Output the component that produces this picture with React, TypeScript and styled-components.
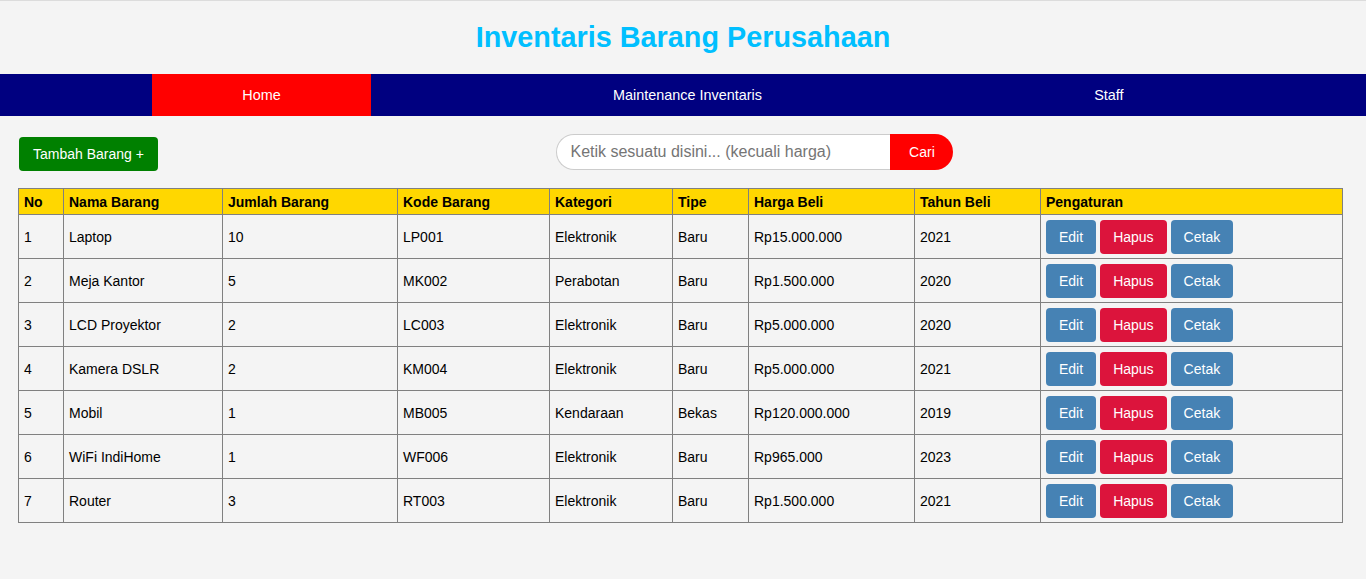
import React from "react";
import styled, { createGlobalStyle } from "styled-components";

const Global = createGlobalStyle`
  html, body { margin: 0; padding: 0; }
  body {
    background: #f4f4f4;
    font-family: "Liberation Sans", Arial, sans-serif;
    color: #000;
    border-top: 1px solid #dcdcdc;
  }
`;

const Header = styled.header`
  height: 73px;
  display: flex;
  align-items: center;
  justify-content: center;
`;

const Title = styled.h1`
  margin: 0;
  font-size: 28.8px;
  font-weight: bold;
  color: #00bfff;
`;

const Nav = styled.nav`
  background: #000080;
  height: 42px;
  display: flex;
  justify-content: space-evenly;
`;

const NavItem = styled.a<{ $active?: boolean }>`
  display: flex;
  align-items: center;
  padding: 0 90px;
  font-size: 14.4px;
  color: #fff;
  text-decoration: none;
  background: ${(p) => (p.$active ? "#ff0000" : "transparent")};
`;

const Main = styled.main`
  padding: 18px 18px 0 18px;
`;

const Toolbar = styled.div`
  display: flex;
  align-items: flex-start;
  margin-bottom: 17px;
`;

const AddButton = styled.button`
  margin: 3px 0 0 1px;
  height: 34px;
  padding: 0 14px;
  background: #008000;
  color: #fff;
  border: none;
  border-radius: 4px;
  font-family: inherit;
  font-size: 14px;
`;

const SearchForm = styled.form`
  display: flex;
  margin: 0 auto;
  transform: translateX(2px);
`;

const SearchInput = styled.input`
  width: 334px;
  height: 36px;
  box-sizing: border-box;
  padding: 0 13px;
  border: 1px solid #ccc;
  border-right: none;
  border-radius: 18px 0 0 18px;
  background: #fff;
  font-family: inherit;
  font-size: 16px;
  outline: none;
  &::placeholder { color: #757575; }
`;

const SearchButton = styled.button`
  width: 63px;
  height: 36px;
  border: none;
  border-radius: 0 18px 18px 0;
  background: #ff0000;
  color: #fff;
  font-family: inherit;
  font-size: 14px;
`;

const Table = styled.table`
  width: 1324px;
  border-collapse: collapse;
  table-layout: fixed;
  font-size: 14px;
`;

const Th = styled.th`
  background: #ffd700;
  border: 1px solid #808080;
  height: 25px;
  padding: 0 5px;
  text-align: left;
  font-weight: bold;
`;

const Td = styled.td`
  border: 1px solid #808080;
  height: 43px;
  padding: 0 5px;
`;

const Actions = styled.div`
  display: flex;
  gap: 4px;
`;

const ActionButton = styled.button<{ $tone: "blue" | "red" }>`
  height: 34px;
  padding: 0 13px;
  border: none;
  border-radius: 4px;
  color: #fff;
  font-family: inherit;
  font-size: 14px;
  background: ${(p) => (p.$tone === "red" ? "#dc143c" : "#4682b4")};
`;

const cols = [45, 159, 175, 152, 123, 76, 166, 126, 302];
const heads = ["No", "Nama Barang", "Jumlah Barang", "Kode Barang", "Kategori", "Tipe", "Harga Beli", "Tahun Beli", "Pengaturan"];

const rows = [
  ["1", "Laptop", "10", "LP001", "Elektronik", "Baru", "Rp15.000.000", "2021"],
  ["2", "Meja Kantor", "5", "MK002", "Perabotan", "Baru", "Rp1.500.000", "2020"],
  ["3", "LCD Proyektor", "2", "LC003", "Elektronik", "Baru", "Rp5.000.000", "2020"],
  ["4", "Kamera DSLR", "2", "KM004", "Elektronik", "Baru", "Rp5.000.000", "2021"],
  ["5", "Mobil", "1", "MB005", "Kendaraan", "Bekas", "Rp120.000.000", "2019"],
  ["6", "WiFi IndiHome", "1", "WF006", "Elektronik", "Baru", "Rp965.000", "2023"],
  ["7", "Router", "3", "RT003", "Elektronik", "Baru", "Rp1.500.000", "2021"],
];

export default function App() {
  return (
    <>
      <Global />
      <Header>
        <Title>Inventaris Barang Perusahaan</Title>
      </Header>
      <Nav>
        <NavItem $active>Home</NavItem>
        <NavItem>Maintenance Inventaris</NavItem>
        <NavItem>Staff</NavItem>
      </Nav>
      <Main>
        <Toolbar>
          <AddButton>Tambah Barang +</AddButton>
          <SearchForm onSubmit={(e) => e.preventDefault()}>
            <SearchInput placeholder="Ketik sesuatu disini... (kecuali harga)" />
            <SearchButton>Cari</SearchButton>
          </SearchForm>
        </Toolbar>
        <Table>
          <colgroup>
            {cols.map((w, i) => (
              <col key={i} style={{ width: w }} />
            ))}
          </colgroup>
          <thead>
            <tr>
              {heads.map((h) => (
                <Th key={h}>{h}</Th>
              ))}
            </tr>
          </thead>
          <tbody>
            {rows.map((r) => (
              <tr key={r[0]}>
                {r.map((c, i) => (
                  <Td key={i}>{c}</Td>
                ))}
                <Td>
                  <Actions>
                    <ActionButton $tone="blue">Edit</ActionButton>
                    <ActionButton $tone="red">Hapus</ActionButton>
                    <ActionButton $tone="blue">Cetak</ActionButton>
                  </Actions>
                </Td>
              </tr>
            ))}
          </tbody>
        </Table>
      </Main>
    </>
  );
}
